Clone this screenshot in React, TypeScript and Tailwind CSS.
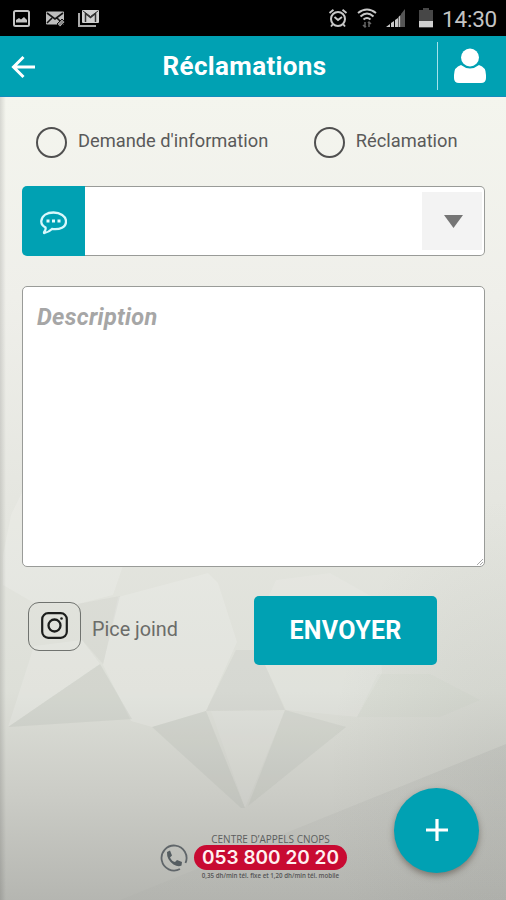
import React from 'react';

function Backdrop() {
  return (
    <svg className="absolute inset-0 h-full w-full" viewBox="0 0 506 803" preserveAspectRatio="none" aria-hidden="true">
      <defs>
        <linearGradient id="edge" x1="0" x2="1" y1="0" y2="0">
          <stop offset="0" stopColor="#000" stopOpacity="0.12" />
          <stop offset="1" stopColor="#000" stopOpacity="0" />
        </linearGradient>
        <radialGradient id="corner" cx="1" cy="0.85" r="0.35">
          <stop offset="0" stopColor="#70736f" stopOpacity="0.12" />
          <stop offset="1" stopColor="#70736f" stopOpacity="0" />
        </radialGradient>
        <linearGradient id="ridge" x1="0" x2="0" y1="0" y2="1">
          <stop offset="0" stopColor="#858785" stopOpacity="0.13" />
          <stop offset="1" stopColor="#858785" stopOpacity="0.04" />
        </linearGradient>
      </defs>
      <rect width="506" height="803" fill="url(#corner)" />
      <g transform="translate(0 -97)">
        <g fill="#fff" fillOpacity="0.15">
          <path d="M11 515 28 480 110 500 123 566 113 595 78 604 34 603 3 585 3 555Z" />
          <path d="M118 597 208 573 218 583 237 642 206 711 152 727 131 721 103 665Z" />
          <path d="M34 646 82 640 100 664 8 727Z" />
          <path d="M276 580 330 573 378 600 382 673 357 717 286 710 265 665 258 620Z" fillOpacity="0.1" />
        </g>
        <g fill="#8d908b" fillOpacity="0.12">
          <path d="M100 664 132 719 8 727Z" />
          <path d="M236 650 254 650 265 665 285 710 206 711Z" fillOpacity="0.08" />
          <path d="M206 711 152 727 241 808 245 808Z" />
          <path d="M285 710 346 727 248 806Z" fillOpacity="0.1" />
          <path d="M378 674 430 674 480 700 440 717 357 717Z" fillOpacity="0.03" />
          <path d="M78 604 120 596 103 664 82 640Z" fillOpacity="0.07" />
        </g>
        <path d="M211 711 285 710 245 808Z" fill="#fff" fillOpacity="0.07" />
        <path d="M120 900 506 744V900Z" fill="url(#ridge)" />
      </g>
      <rect width="6" height="803" fill="url(#edge)" />
    </svg>
  );
}

function StatusBar() {
  return (
    <div className="flex h-9 shrink-0 items-center justify-between bg-black">
      <div className="ml-3 flex items-center">
        <svg className="h-[19px] w-[19px]" viewBox="0 0 19 19" fill="none">
          <rect x="2" y="2" width="15" height="15" rx="1.5" stroke="#c4c4c4" strokeWidth="2" />
          <path d="M4 13.5V11l3-2 2 1.5L12 8l3 3v2.500Z" fill="#c4c4c4" />
        </svg>
        <svg className="ml-[14px] h-[19px] w-[21px]" viewBox="0 0 21 19" fill="none">
          <rect x="1" y="2.500" width="18" height="13" rx="1" fill="#bdbdbd" />
          <path d="m2 4 8 6 8-6M2 14l5-5m5 0 3 3" stroke="#151515" strokeWidth="1.600" />
          <path d="m12 15 5-5 3 3-5 5Z" fill="#888" stroke="#111" />
          <path d="m13.500 15 4-4m-2.500 6 4-4" stroke="#bbb" strokeDasharray="1 1" />
        </svg>
        <svg className="ml-[11px] h-[20px] w-[24px]" viewBox="0 0 24 20" fill="none">
          <path d="M2 5v13h17" stroke="#aaa" strokeWidth="2" />
          <rect x="5" y="2" width="17" height="13" rx="1" fill="#d0d0d0" />
          <path d="M8.500 14V5.500l5 4 5-4V14" stroke="#333" strokeWidth="1.500" />
          <path d="m6 3 7.500 5.500L21 3" stroke="#333" strokeWidth="1" />
        </svg>
      </div>
      <div className="mr-[8px] flex items-center">
        <svg className="h-[20px] w-[20px]" viewBox="0 0 20 20" fill="none" stroke="#c8c8c8" strokeWidth="2">
          <circle cx="10" cy="11" r="7" />
          <path d="m1.500 5 4-3.200M18.500 5l-4-3.200M6.500 9l3.500 3 4-3M5 16l-2 2.500M15 16l2 2.500" strokeWidth="1.900" />
        </svg>
        <svg className="ml-[9px] h-[22px] w-[20px]" viewBox="0 0 20 22" fill="none" stroke="#c8c8c8" strokeWidth="2">
          <path d="M1 6q9-7 18 0M3.500 9.500q6.500-6 13 0M6.500 12.500q3.500-3 7 0" />
          <path d="M8 15v5m-2-2 2 2 1-1M12 20v-5m-1 1 1-1 2 2" stroke="#666" strokeWidth="1.500" />
        </svg>
        <svg className="ml-[9px] h-[20px] w-[20px]" viewBox="0 0 20 20">
          <path d="M0 19 4 16v3Z M5 19v-4l3-2v6Z M9 19v-7l3-2v9Z M12.500 19V9l2-2v12Z" fill="#c8c8c8" />
          <path d="M15 19V6l4-5v18Z" fill="#555" />
        </svg>
        <svg className="ml-[13px] h-[20px] w-[14px]" viewBox="0 0 14 20">
          <path d="M4 0h6v2h4v18H0V2h4Z" fill="#474747" />
          <path d="M0 13h14v6H0Z" fill="#d0d0d0" />
        </svg>
        <span className="ml-[9px] w-[56px] pt-px text-[22.500px] leading-9 tracking-[-0.2px] whitespace-nowrap text-[#c4c4c4]">14:30</span>
      </div>
    </div>
  );
}

function Header() {
  return (
    <header className="flex h-[61px] shrink-0 items-center border-b border-[#168bbd] bg-[#00a1b3]">
      <svg className="mt-px ml-[11px] h-6 w-6" viewBox="0 0 24 24" fill="none" stroke="#fff" strokeWidth="3">
        <path d="M24 12H3M12.500 2 2.500 12l10 10" />
      </svg>
      <h1 className="ml-[54px] flex-1 pl-[73.500px] text-[26px] leading-[60px] font-bold tracking-[0.35px] text-white">Réclamations</h1>
      <div className="h-12 w-px bg-[#a5e2eb]" />
      <svg className="mr-5 ml-4 h-9 w-8" viewBox="0 0 32 36" fill="#fff">
        <circle cx="16" cy="9.500" r="9" />
        <path d="M7 17q4.500 3.500 9 3.500t9-3.500q7 2 7 10v3q0 5-5 5H5q-5 0-5-5v-3Q0 19 7 17Z" />
      </svg>
    </header>
  );
}

function Choice({ label }: { label: string }) {
  return (
    <label className="flex items-center gap-3 text-[18.300px] whitespace-nowrap text-[#5a5a5a]">
      <span className="h-[31px] w-[31px] rounded-full border-2 border-[#505050]" />
      <span className="-ml-px pb-[3px] leading-[26px]">{label}</span>
    </label>
  );
}

function CallCentre() {
  return (
    <div className="absolute top-[736px] left-[160px] flex items-center">
      <svg className="mt-[3px] mr-[6px] h-7 w-7" viewBox="0 0 28 28" fill="none">
        <path d="M20 25A12.500 12.500 0 1 1 25.500 19" stroke="#60666a" strokeWidth="1.800" />
        <path d="M7 8 10 6.500l2 5-2 2q2 4 5 4.500l2-2 5 2-.5 3.500q-3 2-8-1-7-5-6.500-12.500Z" fill="#555d61" />
      </svg>
      <div className="flex w-[153px] flex-col items-center whitespace-nowrap">
        <span className="h-[12px] font-['Open_Sans',sans-serif] text-[10px] leading-[13px] text-[#5c5e5e]">CENTRE D’APPELS CNOPS</span>
        <span className="flex h-[25px] w-full items-center justify-center rounded-full bg-[#c80a32] pt-px font-[Inter,sans-serif] text-[19px] font-semibold text-[#fff0f1]">053 800 20 20</span>
        <span className="h-[10px] font-['Open_Sans',sans-serif] text-[6.200px] leading-[11px] font-semibold text-[#555]">0,35 dh/min tél. fixe et 1,20 dh/min tél. mobile</span>
      </div>
    </div>
  );
}

export default function App() {
  return (
    <div className="flex h-[900px] w-[506px] flex-col overflow-hidden font-[Roboto,sans-serif]">
      <StatusBar />
      <Header />
      <main className="relative flex-1 bg-[linear-gradient(to_bottom,#f4f5ee_0%,#efefea_25%,#e5e6e0_50%,#dddfd8_74%,#cbccc6_87%,#b5b6b1_100%)]">
        <Backdrop />
        <div className="relative flex h-full flex-col pr-[21px] pl-[22px]">
          <div className="flex h-[90px] items-center gap-[45.500px] pl-[14px]">
            <Choice label="Demande d'information" />
            <Choice label="Réclamation" />
          </div>
          <div className="-mt-px flex h-[70px] shrink-0">
            <div className="flex w-[63px] items-center justify-center rounded-l-[5px] bg-[#00a1b3]">
              <svg className="mt-[3px] h-6 w-[27px]" viewBox="0 0 27 24" fill="none">
                <path d="M4.500 22q-1 0 0-1.500 1.500-2 1-4Q1 14 1.300 10C2 4.500 7 1.500 13.500 1.500S26 5 26 10.500s-6 8.500-14 7.500Q9 21 4.500 22Z" stroke="#d9f8fc" strokeWidth="2.300" />
                <path d="M6.500 8.500h3v3h-3Zm5.500 0h3v3h-3Zm5.500 0h3v3h-3Z" fill="#e8fbfd" />
              </svg>
            </div>
            <div className="flex flex-1 justify-end rounded-r-[5px] border border-l-0 border-[#999b98] bg-white">
              <div className="my-[5px] mr-[2px] flex w-[60px] items-center justify-center bg-[#f3f3f3]">
                <svg className="ml-[3px] h-[13px] w-[19px]" viewBox="0 0 19 13"><path d="M0 0h19L9.500 13Z" fill="#757575" /></svg>
              </div>
            </div>
          </div>
          <div className="relative mt-[30px] h-[281px] shrink-0">
            <textarea
              className="block h-full w-full resize-none rounded-[5px] border border-[#999b98] bg-white px-[14px] py-[16px] text-[23.500px] leading-[29px] tracking-[0.3px] outline-none placeholder:font-bold placeholder:text-[#a6a6a6] placeholder:italic"
              placeholder="Description"
            />
            <svg className="absolute right-[2px] bottom-[2px] h-[6px] w-[6px]" viewBox="0 0 6 6" stroke="#aaa"><path d="M0 6 6 0M3 6l3-3" /></svg>
          </div>
          <div className="mt-[29px] flex items-start">
            <div className="mt-[6px] ml-[6px] flex h-[49px] w-[53px] items-center justify-center rounded-[11px] border border-[#70736f]">
              <svg className="mb-[2px] h-[27px] w-[27px]" viewBox="0 0 27 27" fill="none" stroke="#1c1e1c">
                <rect x="1.200" y="1.200" width="24.600" height="24.600" rx="6" strokeWidth="2.200" />
                <circle cx="13.500" cy="13.500" r="6" strokeWidth="2.300" />
                <circle cx="20.500" cy="6.500" r="1.300" fill="#1c1e1c" stroke="none" />
              </svg>
            </div>
            <span className="mt-[20px] ml-[11px] w-[162px] text-[19.800px] leading-[28px] text-[#6b6c69]">Pice joind</span>
            <button className="h-[69px] w-[183px] rounded-[5px] bg-[#00a1b3] text-[25px] font-bold tracking-[0.3px] text-white">ENVOYER</button>
          </div>
        </div>
        <CallCentre />
        <button className="absolute top-[691px] left-[394px] flex h-[85px] w-[85px] items-center justify-center rounded-full bg-[#00a1b3] shadow-[0_3px_6px_rgba(70,60,50,0.5)]">
          <svg className="-mt-[2px] h-[22px] w-[22px]" viewBox="0 0 22 22" stroke="#fff" strokeWidth="3.200"><path d="M11 0v22M0 11h22" /></svg>
        </button>
      </main>
    </div>
  );
}
